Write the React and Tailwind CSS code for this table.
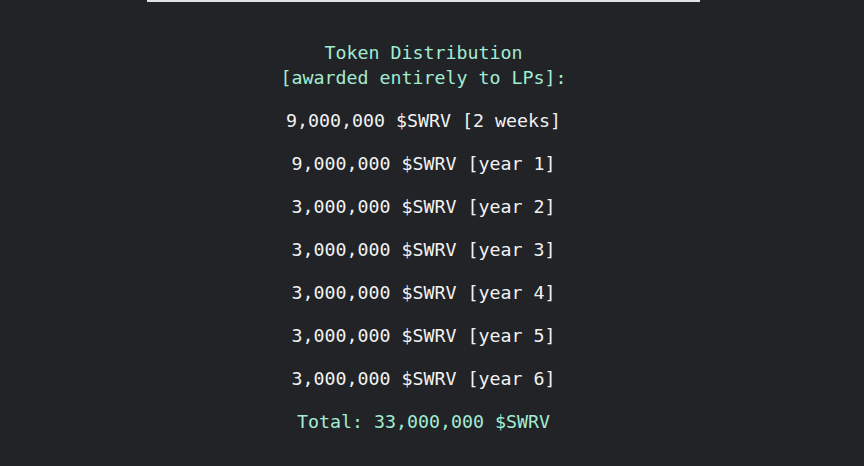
export default function App() {
  const rows = [
    "9,000,000 $SWRV [2 weeks]",
    "9,000,000 $SWRV [year 1]",
    "3,000,000 $SWRV [year 2]",
    "3,000,000 $SWRV [year 3]",
    "3,000,000 $SWRV [year 4]",
    "3,000,000 $SWRV [year 5]",
    "3,000,000 $SWRV [year 6]",
  ];
  return (
    <div
      className="w-[864px] h-[466px] bg-[#212327] overflow-hidden"
      style={{ fontFamily: '"DejaVu Sans Mono", "Liberation Mono", monospace' }}
    >
      <div className="ml-[147px] w-[553px] flex flex-col items-center">
        <div className="w-full h-[2px] bg-[#e2e2e2]" />
        <div className="mt-[38px] text-[18.3px] leading-[25px] text-[#a3ecd3] text-center">
          <div>Token Distribution</div>
          <div>[awarded entirely to LPs]:</div>
        </div>
        <div className="mt-[9px] flex flex-col items-center">
          {rows.map((r) => (
            <div key={r} className="h-[43px] leading-[43px] text-[18.3px] text-[#f2f2f2] whitespace-pre">
              {r}
            </div>
          ))}
          <div className="h-[43px] leading-[43px] text-[18.3px] text-[#a3ecd3] whitespace-pre">
            Total: 33,000,000 $SWRV
          </div>
        </div>
      </div>
    </div>
  );
}
